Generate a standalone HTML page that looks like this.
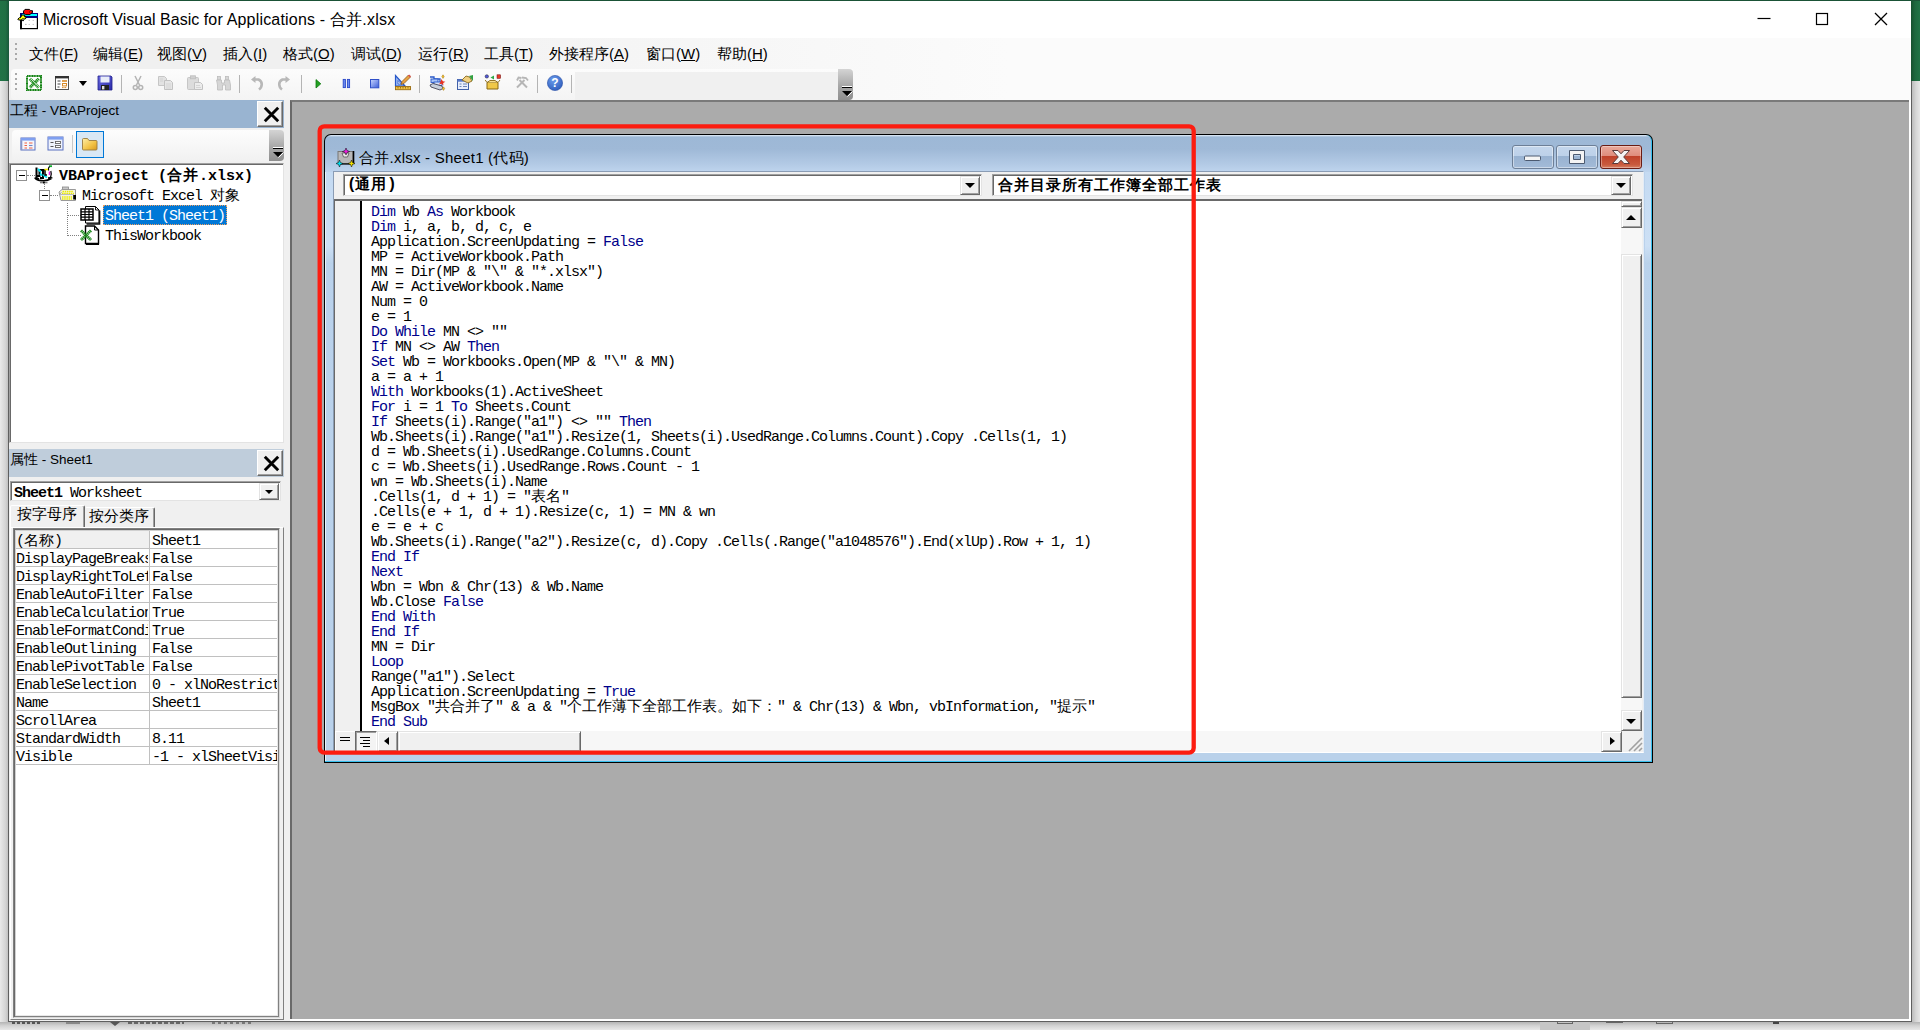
<!DOCTYPE html>
<html><head><meta charset="utf-8"><title>VBA</title>
<style>
*{box-sizing:border-box;margin:0;padding:0}
html,body{width:1920px;height:1030px;overflow:hidden}
body{position:relative;background:#e6e6e6;font-family:"Liberation Sans",sans-serif;color:#000}
.abs,.abs>*{position:absolute}
div,span,svg,i,b{position:absolute}
.t{white-space:nowrap;line-height:1}
.mono{font-family:"Liberation Mono",monospace;font-size:15px;letter-spacing:-1.0015px;white-space:pre;line-height:15px;height:15px}
.mono b{position:static;font-weight:bold}
.mono span,.mono i{position:static;font-style:normal}
.cj{display:inline-block;white-space:nowrap;font-size:15px;letter-spacing:0;font-family:"Liberation Sans",sans-serif;line-height:1px;vertical-align:baseline}
.kw{color:#00008b}
/* backdrop */
#green{left:0;top:0;width:1920px;height:81px;background:#217346}
#shl{left:0;top:81px;width:9px;height:949px;background:linear-gradient(to right,#e9e9e9,#d4d4d4 60%,#b9b9b9)}
#shr{left:1912px;top:81px;width:8px;height:949px;background:linear-gradient(to right,#bcbcbc,#d6d6d6 50%,#e6e6e6)}
#shb{left:0;top:1022px;width:1920px;height:8px;background:linear-gradient(to bottom,#b4b4b4,#d2d2d2 45%,#e8e8e8)}
#win{left:8px;top:0;width:1904px;height:1022px;background:#fff;border:1px solid #5f5f5f;border-top-color:#1d4f33}
/* title */
#ttl{left:43px;top:11.5px;font-size:16px;letter-spacing:0px}
/* cmd bars */
#cmd{left:9px;top:38px;width:1902px;height:62px;background:linear-gradient(to right,#f0f0f0 0,#f0f0f0 300px,#fbfbfb 1000px)}
.mi{top:45px;font-size:15px;white-space:nowrap;line-height:17px}
.mi u{text-decoration:underline;text-underline-offset:1px}
.dot{width:2px;height:2px;background:#a9a9a9;left:15px}
#tb{left:11px;top:69px;width:842px;height:31px;background:linear-gradient(#fcfcfc,#f4f4f4);border-radius:4px 0 0 4px}
.sep{width:1px;height:18px;background:#b4b4b4;top:75px}
#tbcombo{left:575px;top:72px;width:263px;height:28px;background:#f0f0f0}
#tbend{left:838px;top:69px;width:15px;height:31px;border-radius:0 4px 4px 0;background:linear-gradient(#d4d4d4,#a6a6a6 55%,#8e8e8e)}
/* dock */
#dock{left:9px;top:100px;width:281px;height:921px;background:#f0f0f0}
.cap{left:9px;width:275px;height:28px;font-size:15px}
.capt{left:1px;top:2px;font-size:13.5px;white-space:nowrap;line-height:17px}
.xbtn{left:248px;top:1px;width:26px;height:26px;background:#f0f0f0;border:1px solid;border-color:#fff #696969 #696969 #fff;box-shadow:inset -1px -1px 0 #a0a0a0}
.sunk{border:1px solid;border-color:#a0a0a0 #e3e3e3 #e3e3e3 #a0a0a0;box-shadow:inset 1px 1px 0 #696969;background:#fff}
.btn3d{background:#f0f0f0;border:1px solid;border-color:#e3e3e3 #696969 #696969 #e3e3e3;box-shadow:inset 1px 1px 0 #fff,inset -1px -1px 0 #a0a0a0}
.arr{width:0;height:0;border-style:solid}
/* mdi */
#mdi{left:290px;top:100px;width:1619px;height:919px;background:#ababab;border-left:2px solid #696969;border-top:2px solid #7a7a7a}
</style></head><body>
<div id="green"></div><div id="shl"></div><div id="shr"></div><div id="shb"></div>
<div id="win"></div>
<div style="left:1911px;top:0;width:9px;height:81px;background:linear-gradient(to right,#16502f,#1d683e 45%,#217346)"></div>
<div style="left:0;top:0;width:9px;height:81px;background:linear-gradient(to right,#217346,#207044 60%,#18583a)"></div>
<div style="left:0;top:0;width:1920px;height:1px;background:#1a5236"></div>
<!-- title bar -->
<svg style="left:17px;top:7px" width="23" height="24" viewBox="0 0 23 24">
 <rect x="3.600" y="6.600" width="16.800" height="15" fill="#fff" stroke="#000" stroke-width="1.200"/>
 <rect x="3" y="6" width="2" height="16.200" fill="#000"/>
 <rect x="3" y="6" width="18" height="5" fill="#000080"/>
 <rect x="5" y="7" width="15" height="2" fill="#00ffff"/>
 <path d="M11.700 13.400h1M15.700 13.400h1M8 17.400h1.600M11.700 17.400h1M15.700 17.400h1" stroke="#b0b0b0" stroke-width="1"/><g transform="translate(0,.9)">
 <path d="M6.500 3.200l1.500-1.700h4.500l1.200 1.300h1.800v2l-1.500.6-.9 1.300h-4.700l-1.900-1.400z" fill="#ff0000" stroke="#000" stroke-width="1"/>
 <path d="M12.500 3.200v2" stroke="#800" stroke-width=".8"/>
 <path d="M.8 11.200l1.600-1.400h1l1-1.500V7.200h3.200v1.600l1.400.2v1.300l-1 .8H5.500l-1.300 1H1.500z" fill="#ffff00" stroke="#000" stroke-width="1"/>
 <path d="M5 10.800h3" stroke="#808000" stroke-width="1.200"/>
 <path d="M3 12.200h4v1H3z" fill="#000"/></g>
</svg>
<div id="ttl" class="t">Microsoft Visual Basic <span style="position:static;letter-spacing:.19px">for Applications - 合并.xlsx</span></div>
<svg style="left:1750px;top:6px" width="150" height="26" viewBox="0 0 150 26">
 <path d="M7.5 12.5h13" stroke="#000" stroke-width="1.2" fill="none"/>
 <rect x="66.5" y="7.5" width="11" height="11" stroke="#000" stroke-width="1.2" fill="none"/>
 <path d="M125 7l12 12M137 7l-12 12" stroke="#000" stroke-width="1.3" fill="none"/>
</svg>
<!-- command bars -->
<div id="cmd"></div>
<div class="dot" style="top:43px"></div><div class="dot" style="top:48px"></div><div class="dot" style="top:53px"></div><div class="dot" style="top:58px"></div>
<div class="mi" style="left:29px">文件(<u>F</u>)</div>
<div class="mi" style="left:93px">编辑(<u>E</u>)</div>
<div class="mi" style="left:157px">视图(<u>V</u>)</div>
<div class="mi" style="left:223px">插入(<u>I</u>)</div>
<div class="mi" style="left:283px">格式(<u>O</u>)</div>
<div class="mi" style="left:351px">调试(<u>D</u>)</div>
<div class="mi" style="left:418px">运行(<u>R</u>)</div>
<div class="mi" style="left:484px">工具(<u>T</u>)</div>
<div class="mi" style="left:549px">外接程序(<u>A</u>)</div>
<div class="mi" style="left:646px">窗口(<u>W</u>)</div>
<div class="mi" style="left:717px">帮助(<u>H</u>)</div>
<div id="tb"></div>
<div class="dot" style="top:73px"></div><div class="dot" style="top:78px"></div><div class="dot" style="top:83px"></div><div class="dot" style="top:88px"></div>
<div id="tbcombo"></div>
<div id="tbend"></div>
<svg style="left:838px;top:84px" width="15" height="15" viewBox="0 0 15 15"><path d="M4 2.5h10" stroke="#fff" stroke-width="1"/><path d="M4 3.5h10" stroke="#000" stroke-width="1"/><path d="M4 7h10l-5 5z" fill="#000"/><path d="M9.5 12.5l5-5" stroke="#fff" stroke-width="1"/></svg>
<div class="sep" style="left:121px"></div><div class="sep" style="left:239px"></div><div class="sep" style="left:301px"></div><div class="sep" style="left:419px"></div><div class="sep" style="left:537px"></div><div class="sep" style="left:571px"></div>
<!-- toolbar icons -->
<svg style="left:26px;top:75px" width="16" height="16" viewBox="0 0 16 16">
 <rect x="1" y="1" width="14" height="14" fill="#fff" stroke="#128212" stroke-width="2" stroke-dasharray="1.300 .35"/>
 <path d="M3.800 3.800l9 8.700M12.800 3.800l-9 8.700" stroke="#1f8f1f" stroke-width="3.200" stroke-dasharray="1.300 .4"/>
 <path d="M4.500 3.600l8.500 8.200" stroke="#e8f4e8" stroke-width=".8"/>
</svg>
<svg style="left:54px;top:75px" width="16" height="16" viewBox="0 0 16 16">
 <rect x="1.5" y="1.5" width="13" height="13" fill="#fff" stroke="#555" stroke-width="1"/>
 <rect x="1" y="1" width="14" height="2.4" fill="#333"/>
 <path d="M3.5 6h3M3.5 9h3M3.5 12h2" stroke="#444" stroke-width="1"/>
 <rect x="8" y="5.2" width="5" height="1.6" fill="#d88a28"/><rect x="8.5" y="8.5" width="4" height="2.4" fill="none" stroke="#d88a28" stroke-width="1"/><path d="M8 12.6h5" stroke="#d88a28" stroke-width="1" stroke-dasharray="1.6 .8"/>
</svg>
<div class="arr" style="left:79px;top:81px;border-width:5px 4.5px 0 4.5px;border-color:#000 transparent transparent transparent"></div>
<svg style="left:97px;top:75px" width="16" height="16" viewBox="0 0 16 16">
 <defs><linearGradient id="sv" x1="0" y1="0" x2="1" y2="1"><stop offset="0" stop-color="#6a6ae0"/><stop offset="1" stop-color="#2a2aa8"/></linearGradient></defs>
 <path d="M1 1h13l1 1v13H1z" fill="url(#sv)" stroke="#20208a" stroke-width=".8"/>
 <rect x="3.5" y="1.5" width="9" height="6" fill="#e8ecf8"/>
 <rect x="4" y="10" width="8" height="5" fill="#222"/><rect x="5" y="11" width="2.4" height="3.4" fill="#ddd"/>
</svg>
<!-- disabled: cut copy paste find undo redo -->
<svg style="left:132px;top:75px" width="12" height="16" viewBox="0 0 12 16" fill="none" stroke="#b4b4b4" stroke-width="1.5">
 <path d="M3 1l4.5 9M9 1L4.5 10"/><circle cx="3.3" cy="12.5" r="2"/><circle cx="8.7" cy="12.5" r="2"/>
</svg>
<svg style="left:157px;top:75px" width="18" height="16" viewBox="0 0 18 16">
 <path d="M1.5 1.5h6l2 2v7h-8z" fill="#e2e2e2" stroke="#c6c6c6"/><path d="M7.500 5.500h6l2 2v7h-8z" fill="#e6e6e6" stroke="#c2c2c2"/>
 <path d="M9 9h5M9 11h5M9 13h5M3 4h3M3 6h3" stroke="#cfcfcf" stroke-width=".8"/>
</svg>
<svg style="left:186px;top:75px" width="18" height="16" viewBox="0 0 18 16">
 <rect x="1.500" y="2.500" width="11" height="12" rx="1" fill="#dcdcdc" stroke="#c6c6c6"/><rect x="4.500" y=".8" width="5" height="3" fill="#d0d0d0" stroke="#bdbdbd" stroke-width=".8"/>
 <path d="M8.500 7.500h6l2 2v5h-8z" fill="#ececec" stroke="#c2c2c2"/><path d="M10 10.500h4M10 12.500h5" stroke="#cfcfcf" stroke-width=".8"/>
</svg>
<svg style="left:215px;top:75px" width="16" height="16" viewBox="0 0 16 16" fill="#d6d6d6" stroke="#bcbcbc" stroke-width=".8">
 <rect x="2.500" y="1.500" width="3" height="3.500"/><rect x="10.500" y="1.500" width="3" height="3.500"/>
 <path d="M1.500 5h5v3h3V5h5l1 5v5h-5v-5h-3v5h-5v-5z"/>
</svg>
<svg style="left:250px;top:75px" width="14" height="16" viewBox="0 0 14 16" fill="none">
 <path d="M9 14.500c3.500-2.500 4-8-.5-10H4" stroke="#b8b8b8" stroke-width="2.600"/><path d="M5.500 1L1 4.500l4.500 3.500z" fill="#b8b8b8"/>
</svg>
<svg style="left:277px;top:75px" width="14" height="16" viewBox="0 0 14 16" fill="none">
 <path d="M5 14.500c-3.500-2.500-4-8 .5-10H10" stroke="#b8b8b8" stroke-width="2.600"/><path d="M8.500 1L13 4.500 8.500 8z" fill="#b8b8b8"/>
</svg>
<!-- run/pause/stop/design -->
<svg style="left:315px;top:78px" width="8" height="12" viewBox="0 0 8 12"><path d="M1 1.600l4.800 4.200L1 10z" fill="#22a022" stroke="#0e7a0e" stroke-width=".8"/></svg>
<svg style="left:342px;top:78px" width="9" height="11" viewBox="0 0 9 11"><rect x="1.200" y="1.400" width="2.200" height="8.200" fill="#6a8cf0" stroke="#2a48c8" stroke-width=".9"/><rect x="5.400" y="1.400" width="2.200" height="8.200" fill="#6a8cf0" stroke="#2a48c8" stroke-width=".9"/></svg>
<svg style="left:369px;top:78px" width="11" height="11" viewBox="0 0 11 11"><defs><linearGradient id="st" x1="0" y1="0" x2="1" y2="1"><stop offset="0" stop-color="#c8d6ff"/><stop offset="1" stop-color="#3a5cd8"/></linearGradient></defs><rect x="1.500" y="1.500" width="8.300" height="8.300" fill="url(#st)" stroke="#3050c8" stroke-width="1"/></svg>
<svg style="left:394px;top:74px" width="18" height="17" viewBox="0 0 18 17">
 <path d="M1.500 12V1.500L11 12z" fill="#9ab8f4" stroke="#2858c8" stroke-width="1.200"/><path d="M4 10V6.500L7.300 10z" fill="#fff" stroke="#2858c8" stroke-width=".8"/>
 <rect x="1.500" y="12.500" width="15" height="3.200" fill="#f0c040" stroke="#9a6a10" stroke-width=".9"/><path d="M4 13v1.500M6.500 13v1.500M9 13v1.500M11.500 13v1.500M14 13v1.500" stroke="#7a5208" stroke-width=".7"/>
 <path d="M7 10.500l1-3L14.500 1l2 2L10 9.500z" fill="#e8a040" stroke="#8a5a20" stroke-width=".8"/><path d="M14 1.500l2 2 1-1.200-1.800-1.800z" fill="#d85050"/>
</svg>
<svg style="left:428px;top:74px" width="19" height="18" viewBox="0 0 19 18">
 <path d="M2 3h4v2h6v3" fill="none" stroke="#2858c8" stroke-width="1.300"/>
 <rect x="3" y="5" width="7" height="3.500" fill="#a8c4f8" stroke="#2858c8" stroke-width=".9"/><rect x="6" y="8" width="8" height="3.500" fill="#d8e4fc" stroke="#2858c8" stroke-width=".9"/>
 <path d="M2 11l3-1.500 9 2.500 1 2.500-3 1.500-9-3z" fill="#c8d0dc" stroke="#445" stroke-width=".9"/>
 <path d="M13.500 5l1.300 2.200 2.600.5-2.200 1.300.2 2.600-2-1.800-2.400.800 1.200-2.200z" fill="#e83020"/>
 <path d="M15 .8l1.200 1.800L15 4.400l-1.200-1.800z" fill="#f0c030" stroke="#a07010" stroke-width=".5"/><path d="M15.500 12.800l1.200 1.800-1.200 1.800-1.200-1.800z" fill="#f0c030" stroke="#a07010" stroke-width=".5"/>
</svg>
<svg style="left:456px;top:74px" width="18" height="17" viewBox="0 0 18 17">
 <rect x="1.500" y="5.500" width="11" height="10" fill="#e8eefc" stroke="#4060a8" stroke-width="1"/><rect x="1.500" y="5.500" width="11" height="2.200" fill="#5878c8"/>
 <path d="M3.500 10h2M7 10h4M3.500 12.500h2M7 12.500h4" stroke="#6078b0" stroke-width=".9"/>
 <path d="M6 6l4-4 3.500 1 2.500 4-4 2z" fill="#f0d080" stroke="#8a6a20" stroke-width=".9"/><path d="M13 2l4-1v6z" fill="#30a040"/>
</svg>
<svg style="left:484px;top:74px" width="18" height="17" viewBox="0 0 18 17">
 <path d="M3 8.500h11v6.500H3z" fill="#f0c848" stroke="#8a6810" stroke-width="1"/><path d="M3 8.500l-1.800-2.500M14 8.500l2-2.500M3 8.500l3-2h5l3 2" fill="#f8e090" stroke="#8a6810" stroke-width=".9"/>
 <circle cx="2.800" cy="2.400" r="1.700" fill="#5058d8" stroke="#223" stroke-width=".5"/><path d="M6.500 3.500l3.500-2v4z" fill="#30a848"/><rect x="13" y=".8" width="3.600" height="3.600" fill="#e83828" stroke="#611" stroke-width=".5"/>
</svg>
<svg style="left:515px;top:76px" width="14" height="13" viewBox="0 0 14 13" fill="none" stroke="#b6b6b6">
 <path d="M2 11.500L9.500 4" stroke-width="2"/><path d="M12 11.500L4.500 4" stroke-width="2"/><path d="M7 1.500l4 .5 2 2.500" stroke-width="1.800"/><path d="M2 4.500l1.500-3 3 .5" stroke-width="1.800"/>
</svg>
<svg style="left:547px;top:75px" width="16" height="16" viewBox="0 0 16 16">
 <defs><radialGradient id="hp" cx=".4" cy=".3" r=".8"><stop offset="0" stop-color="#6a9cec"/><stop offset="1" stop-color="#2a58b8"/></radialGradient></defs>
 <circle cx="8" cy="8" r="7.600" fill="url(#hp)" stroke="#2a50a8" stroke-width=".6"/>
 <text x="8" y="12.200" font-family="Liberation Sans" font-weight="bold" font-size="12" fill="#fff" text-anchor="middle">?</text>
</svg>
<div id="dock"></div>
<!-- project caption -->
<div class="cap" style="top:100px;background:#99b4d1"><div class="capt">工程 - VBAProject</div>
 <div class="xbtn"><svg style="left:4.500px;top:3.500px" width="17" height="17" viewBox="0 0 17 17"><path d="M1.800 1.800l13.400 13.400M15.200 1.800L1.800 15.200" stroke="#000" stroke-width="2.900"/></svg></div>
</div>
<!-- project toolbar -->
<div style="left:12px;top:130px;width:258px;height:31px;background:linear-gradient(#fdfdfd,#f1f1f1);border-radius:4px 0 0 4px"></div>
<div style="left:269px;top:130px;width:15px;height:31px;border-radius:0 4px 4px 0;background:linear-gradient(#d4d4d4,#a8a8a8 55%,#8e8e8e)"></div>
<svg style="left:269px;top:145px" width="15" height="15" viewBox="0 0 15 15"><path d="M4 2.500h10" stroke="#fff" stroke-width="1"/><path d="M4 3.500h10" stroke="#000" stroke-width="1"/><path d="M4 7h10l-5 5z" fill="#000"/><path d="M9.500 12.500l5-5" stroke="#fff" stroke-width="1"/></svg>
<svg style="left:20px;top:137px" width="16" height="14" viewBox="0 0 16 14">
 <rect x="1" y="1" width="14" height="12" fill="#f4f6fc" stroke="#5a70c0" stroke-width="1"/><rect x="1" y="1" width="14" height="2.600" fill="#7f9ff0"/>
 <path d="M1.500 3.500v9.500" stroke="#8898c8" stroke-width="1.600"/>
 <path d="M4.500 6h2.500M4.500 8.500h2.500M4.500 11h2.500" stroke="#f06040" stroke-width="1.100"/><path d="M9 6h3.500M9 11h3.500" stroke="#f06040" stroke-width="1.100"/><path d="M9 8.500h3.500" stroke="#7088c8" stroke-width="1.100"/>
</svg>
<svg style="left:47px;top:136px" width="17" height="15" viewBox="0 0 17 15">
 <rect x="1" y="1" width="15" height="13" fill="#eef2fc" stroke="#5a70c0" stroke-width="1"/><rect x="1" y="1" width="15" height="2.600" fill="#7f9ff0"/>
 <path d="M3.500 6.500h3M3.500 10.500h3" stroke="#555" stroke-width="1.100"/><rect x="8.500" y="5.500" width="5" height="2" fill="#fff" stroke="#666" stroke-width=".9"/><rect x="8.500" y="9.500" width="5" height="2" fill="#fff" stroke="#666" stroke-width=".9"/>
</svg>
<div style="left:72px;top:135px;width:1px;height:18px;background:#c8c8c8"></div>
<div style="left:76px;top:131px;width:28px;height:27px;background:#d9e8f5;border:1px solid #0078d7"></div>
<svg style="left:81px;top:137px" width="17" height="14" viewBox="0 0 17 14">
 <defs><linearGradient id="fd" x1="0" y1="0" x2="1" y2="1"><stop offset="0" stop-color="#fdeea8"/><stop offset=".6" stop-color="#f2c244"/><stop offset="1" stop-color="#d89a20"/></linearGradient></defs>
 <path d="M1.500 2.500q0-1 1-1h4l1.500 2h7q1 0 1 1v7.500q0 1-1 1h-12.500q-1 0-1-1z" fill="url(#fd)" stroke="#9a7a40" stroke-width=".9"/>
</svg>
<!-- tree -->
<div class="sunk" style="left:9px;top:163px;width:275px;height:280px"></div>
<!-- tree lines -->
<div style="left:27px;top:175px;width:8px;border-top:1px dotted #808080"></div>
<div style="left:44px;top:184px;height:7px;border-left:1px dotted #808080"></div>
<div style="left:50px;top:195px;width:8px;border-top:1px dotted #808080"></div>
<div style="left:67px;top:203px;height:33px;border-left:1px dotted #808080"></div>
<div style="left:67px;top:215px;width:14px;border-top:1px dotted #808080"></div>
<div style="left:67px;top:235px;width:14px;border-top:1px dotted #808080"></div>
<!-- expand boxes -->
<div style="left:16px;top:170px;width:11px;height:11px;border:1px solid #919191;background:#fff"><div style="left:1.500px;top:3.500px;width:6px;height:1.500px;background:#000"></div></div>
<div style="left:39px;top:190px;width:11px;height:11px;border:1px solid #919191;background:#fff"><div style="left:1.500px;top:3.500px;width:6px;height:1.500px;background:#000"></div></div>
<!-- tree icons -->
<svg style="left:34px;top:165px" width="20" height="20" viewBox="0 0 20 20">
 <path d="M2.500 2.500v8.500h3V5h3.500v8h-3" fill="none" stroke="#000" stroke-width="2"/>
 <path d="M4 4l3 3M6 8.500l2 2M9 10l4 2.500" stroke="#00e0f0" stroke-width="2"/>
 <path d="M9 5h2v5h2" fill="none" stroke="#000" stroke-width="1.500"/>
 <path d="M10.500 4.500h3.500" stroke="#f0e800" stroke-width="1.600"/>
 <path d="M15.500 6.500v3.500" stroke="#f020f0" stroke-width="1.600"/>
 <path d="M15 1.200h3" stroke="#10b030" stroke-width="1.800"/>
 <path d="M15.500 1.500c-1.500 1.500-1.500 2.500-.8 4M16.800 6c.8 2 .5 4.500-.3 6.500l2 .5" fill="none" stroke="#000" stroke-width="1.200"/>
 <path d="M.8 12.500c1 1.800 3.500 3 7 3.200 3.500.3 7-.5 9.500-2.200M2 12.500l3 1.500M14 13l3.500-.5" fill="none" stroke="#000" stroke-width="1.700"/>
 <path d="M6 17.500h7.500" stroke="#808080" stroke-width="1.600"/><rect x="9" y="16.600" width="1.800" height="1.800" fill="#000"/>
</svg>
<svg style="left:58px;top:186px" width="20" height="17" viewBox="0 0 20 17">
 <rect x="4.500" y="1" width="6" height="2.400" fill="#c8c8c8" stroke="#888" stroke-width=".8"/>
 <path d="M1 6l3-2.500h13.500v11H3z" fill="#f4f4e0" stroke="#999" stroke-width="1"/>
 <path d="M4.500 5.500h11M4 7.500h12M4 11h10M4 13h10" stroke="#eaea00" stroke-width="1.600" stroke-dasharray="1.500 .7"/>
 <path d="M2 8.500h14" stroke="#bbb" stroke-width="1"/><rect x="15.200" y="9" width="2.800" height="4.500" fill="#000"/><path d="M1.500 8l2-1.500" stroke="#999" stroke-width="1"/>
</svg>
<svg style="left:80px;top:205px" width="21" height="20" viewBox="0 0 21 20">
 <path d="M5.500 1.500h10l3.500 3.500v13h-13.500z" fill="#fff" stroke="#000" stroke-width="1"/><path d="M19.600 5.500v13.600h-13" fill="none" stroke="#111" stroke-width="1.500"/><path d="M15.500 1.500v3.500h3.500" fill="none" stroke="#000" stroke-width=".9"/>
 <rect x="1" y="4" width="12" height="11" fill="#fff" stroke="#000" stroke-width="1.500"/><path d="M1 6.800h12M1 9.500h12M1 12.200h12M5 4v11M9 4v11" stroke="#000" stroke-width="1.200"/>
</svg>
<svg style="left:80px;top:225px" width="20" height="20" viewBox="0 0 20 20">
 <path d="M5.500 1h9l4 4v13.500h-13z" fill="#fff" stroke="#000" stroke-width="1.400"/><path d="M14.500 1v4h4" fill="none" stroke="#000" stroke-width="1"/><path d="M6 19.300h13" stroke="#000" stroke-width="1.400"/>
 <path d="M1 5.500l10 9.500M11 5.500l-10 9.500" stroke="#1f8a1f" stroke-width="3" stroke-dasharray="1.400 .45"/>
</svg>
<!-- tree labels -->
<div class="mono" style="left:59px;top:169px;font-weight:bold;letter-spacing:-.0015px">VBAProject (<span class="cj" style="width:32px;font-weight:bold;letter-spacing:1px">合并</span>.xlsx)</div>
<div class="mono" style="left:82px;top:189px">Microsoft Excel <span class="cj" style="width:30px">对象</span></div>
<div style="left:103px;top:205px;width:124px;height:20px;background:#0078d7;border:1px dotted #f0a060"></div>
<div class="mono" style="left:105px;top:209px;color:#fff">Sheet1 (Sheet1)</div>
<div class="mono" style="left:105px;top:229px">ThisWorkbook</div>
<!-- properties caption -->
<div class="cap" style="top:449px;background:#bfcddb"><div class="capt">属性 - Sheet1</div>
 <div class="xbtn"><svg style="left:4.500px;top:3.500px" width="17" height="17" viewBox="0 0 17 17"><path d="M1.800 1.800l13.400 13.400M15.200 1.800L1.800 15.200" stroke="#000" stroke-width="2.900"/></svg></div>
</div>
<!-- combobox -->
<div class="sunk" style="left:10px;top:481px;width:271px;height:20px"></div>
<div class="mono" style="left:14px;top:486px"><b>Sheet1</b> Worksheet</div>
<div class="btn3d" style="left:259px;top:483px;width:20px;height:17px"><div class="arr" style="left:5px;top:6px;border-width:4px 4px 0 4px;border-color:#000 transparent transparent transparent"></div></div>
<!-- tabs -->
<div style="left:10px;top:505px;width:75px;height:24px;background:#f0f0f0;border:1px solid;border-color:#fff #696969 transparent #fff;border-radius:2px 2px 0 0;box-shadow:inset -1px 0 0 #a0a0a0"></div>
<div style="left:85px;top:507px;width:70px;height:21px;background:#f0f0f0;border:1px solid;border-color:#fff #696969 transparent transparent;border-radius:2px 2px 0 0;box-shadow:inset -1px 0 0 #a0a0a0"></div>
<div class="t" style="left:17px;top:506px;font-size:15px">按字母序</div>
<div class="t" style="left:89px;top:508px;font-size:15px">按分类序</div>
<!-- grid -->
<div style="left:10px;top:527px;width:274px;height:493px;border:1px solid;border-color:#fff #808080 #808080 #fff"></div>
<div style="left:13px;top:528px;width:267px;height:490px;background:#fff;border:1px solid;border-color:#808080 #d8d8d8 #d8d8d8 #808080;box-shadow:inset 1px 1px 0 #696969,inset -1px -1px 0 #808080,inset 2px 2px 0 #d0d0d0,inset -2px -2px 0 #e8e8e8"></div>
<div style="left:16px;top:531px;width:133px;height:17px;background:#f0f0f0"></div>
<div style="left:16px;top:548px;width:261px;height:1px;background:#c0c0c0"></div>
<div class="mono" style="left:16px;top:534px;width:132px;overflow:hidden">(<span class="cj" style="width:30px">名称</span>)</div>
<div class="mono" style="left:152px;top:534px;width:125px;overflow:hidden">Sheet1</div>
<div style="left:16px;top:566px;width:261px;height:1px;background:#c0c0c0"></div>
<div class="mono" style="left:16px;top:552px;width:132px;overflow:hidden">DisplayPageBreaks</div>
<div class="mono" style="left:152px;top:552px;width:125px;overflow:hidden">False</div>
<div style="left:16px;top:584px;width:261px;height:1px;background:#c0c0c0"></div>
<div class="mono" style="left:16px;top:570px;width:132px;overflow:hidden">DisplayRightToLeft</div>
<div class="mono" style="left:152px;top:570px;width:125px;overflow:hidden">False</div>
<div style="left:16px;top:602px;width:261px;height:1px;background:#c0c0c0"></div>
<div class="mono" style="left:16px;top:588px;width:132px;overflow:hidden">EnableAutoFilter</div>
<div class="mono" style="left:152px;top:588px;width:125px;overflow:hidden">False</div>
<div style="left:16px;top:620px;width:261px;height:1px;background:#c0c0c0"></div>
<div class="mono" style="left:16px;top:606px;width:132px;overflow:hidden">EnableCalculation</div>
<div class="mono" style="left:152px;top:606px;width:125px;overflow:hidden">True</div>
<div style="left:16px;top:638px;width:261px;height:1px;background:#c0c0c0"></div>
<div class="mono" style="left:16px;top:624px;width:132px;overflow:hidden">EnableFormatConditionsCalculation</div>
<div class="mono" style="left:152px;top:624px;width:125px;overflow:hidden">True</div>
<div style="left:16px;top:656px;width:261px;height:1px;background:#c0c0c0"></div>
<div class="mono" style="left:16px;top:642px;width:132px;overflow:hidden">EnableOutlining</div>
<div class="mono" style="left:152px;top:642px;width:125px;overflow:hidden">False</div>
<div style="left:16px;top:674px;width:261px;height:1px;background:#c0c0c0"></div>
<div class="mono" style="left:16px;top:660px;width:132px;overflow:hidden">EnablePivotTable</div>
<div class="mono" style="left:152px;top:660px;width:125px;overflow:hidden">False</div>
<div style="left:16px;top:692px;width:261px;height:1px;background:#c0c0c0"></div>
<div class="mono" style="left:16px;top:678px;width:132px;overflow:hidden">EnableSelection</div>
<div class="mono" style="left:152px;top:678px;width:125px;overflow:hidden">0 - xlNoRestrictions</div>
<div style="left:16px;top:710px;width:261px;height:1px;background:#c0c0c0"></div>
<div class="mono" style="left:16px;top:696px;width:132px;overflow:hidden">Name</div>
<div class="mono" style="left:152px;top:696px;width:125px;overflow:hidden">Sheet1</div>
<div style="left:16px;top:728px;width:261px;height:1px;background:#c0c0c0"></div>
<div class="mono" style="left:16px;top:714px;width:132px;overflow:hidden">ScrollArea</div>
<div style="left:16px;top:746px;width:261px;height:1px;background:#c0c0c0"></div>
<div class="mono" style="left:16px;top:732px;width:132px;overflow:hidden">StandardWidth</div>
<div class="mono" style="left:152px;top:732px;width:125px;overflow:hidden">8.11</div>
<div style="left:16px;top:764px;width:261px;height:1px;background:#c0c0c0"></div>
<div class="mono" style="left:16px;top:750px;width:132px;overflow:hidden">Visible</div>
<div class="mono" style="left:152px;top:750px;width:125px;overflow:hidden">-1 - xlSheetVisible</div>
<div style="left:149px;top:531px;width:1px;height:234px;background:#c0c0c0"></div>
<div id="mdi"></div>
<!-- code window frame -->
<div id="cw" style="left:324px;top:134px;width:1329px;height:629px;border-radius:7px 7px 0 0;background:#000"></div>
<div style="left:325px;top:135px;width:1327px;height:627px;border-radius:6px 6px 0 0;background:linear-gradient(#e6f0fa 0,#9db8d6 2px,#9fb9d7 14px,#b4cbe6 30px,#bfd5ee 37px,#bad2ec 38px,#b9d1ea 100%);border-bottom:1px solid #38c0ee;border-right:1px solid #38c0ee"></div>
<div style="left:325px;top:172px;width:1px;height:589px;background:#eaf2fb"></div>
<div style="left:326px;top:172px;width:7px;height:92px;background:linear-gradient(#c4daf2,#cde0f5 80%,#b9d1ea)"></div>
<div style="left:1645px;top:172px;width:6px;height:92px;background:linear-gradient(#c4daf2,#cde0f5 80%,#b9d1ea)"></div>
<div style="left:333px;top:171px;width:1311px;height:582px;background:#f0f0f0;border:1px solid;border-color:#8a9cb4 #e4ecf6 #fff #8a9cb4"></div>
<!-- title icon + text -->
<svg style="left:336px;top:148px" width="20" height="19" viewBox="0 0 20 19">
 <rect x="2" y="3.500" width="15" height="12" fill="#b8b8b8" stroke="#777" stroke-width="1"/><path d="M17.500 3v13" stroke="#000" stroke-width="1.600"/><path d="M3 16h14" stroke="#000" stroke-width="1.200"/>
 <path d="M6 5h7l-1.500 4h-4z" fill="#e8e8e8" stroke="#555" stroke-width=".8"/>
 <path d="M10 0l1 2.500 2.500 1-2.500 1-1 2.500-1-2.500-2.500-1 2.500-1z" fill="#f020e0" stroke="#000" stroke-width=".5"/>
 <path d="M3.500 12l1 2.500 2.500 1-2.500 1-1 2.500-1-2.500-2.500-1 2.500-1z" fill="#00e0f0" stroke="#000" stroke-width=".5"/>
 <path d="M15.500 12l1 2.500 2.500 1-2.500 1-1 2.500-1-2.500-2.500-1 2.500-1z" fill="#f0e000" stroke="#000" stroke-width=".5"/>
</svg>
<div class="t" style="left:359px;top:149px;font-size:15px;line-height:17px;letter-spacing:.24px"><span style="position:static;font-size:15px">合并</span>.xlsx - Sheet1 (<span style="position:static">代码</span>)</div>
<!-- caption buttons -->
<div class="cbtn" style="left:1512px;top:145px;width:42px;height:24px;border-radius:3px;border:1px solid #6d7f97;background:linear-gradient(#c3d6ec 0,#bdd1e9 45%,#98b2d1 46%,#a3bbd8 100%);box-shadow:inset 0 0 0 1px rgba(255,255,255,.45)"></div>
<div class="cbtn" style="left:1556px;top:145px;width:42px;height:24px;border-radius:3px;border:1px solid #6d7f97;background:linear-gradient(#c3d6ec 0,#bdd1e9 45%,#98b2d1 46%,#a3bbd8 100%);box-shadow:inset 0 0 0 1px rgba(255,255,255,.45)"></div>
<div class="cbtn" style="left:1600px;top:145px;width:42px;height:24px;border-radius:3px;border:1px solid #6a1c14;background:linear-gradient(#e9a99b 0,#df8c7c 45%,#bf4029 46%,#c95a3e 85%,#d67f63 100%);box-shadow:inset 0 0 0 1px rgba(255,255,255,.35)"></div>
<svg style="left:1512px;top:145px" width="130" height="24" viewBox="0 0 130 24">
 <rect x="12.500" y="11" width="16" height="4.500" rx="1" fill="#f4f4f4" stroke="#4c5a70" stroke-width="1"/>
 <path d="M57.500 5.500h15v13h-15z M61.500 9.500v5h7v-5z" fill="#f4f4f4" fill-rule="evenodd" stroke="#4c5a70" stroke-width="1"/>
 <path d="M100.500 5.500h5.500l3 3.300 3-3.300h5.500l-5.800 6.500 5.800 6.500h-5.500l-3-3.300-3 3.300h-5.500l5.800-6.500z" fill="#f4f4f4" stroke="#5a3a3a" stroke-width="1"/>
</svg>
<!-- combos -->
<div class="sunk" style="left:343px;top:174px;width:639px;height:22px"></div>
<div class="btn3d" style="left:960px;top:176px;width:20px;height:19px"><div class="arr" style="left:4px;top:6px;border-width:5px 5px 0 5px;border-color:#000 transparent transparent transparent"></div></div>
<div class="t" style="left:347px;top:177px;font-size:16px;font-weight:bold;font-family:'Liberation Mono',monospace;letter-spacing:-1.600px">(<span class="cj" style="width:32px;position:static;font-weight:bold;letter-spacing:1px">通用</span>)</div>
<div class="sunk" style="left:992px;top:174px;width:641px;height:22px"></div>
<div class="btn3d" style="left:1611px;top:176px;width:20px;height:19px"><div class="arr" style="left:4px;top:6px;border-width:5px 5px 0 5px;border-color:#000 transparent transparent transparent"></div></div>
<div class="t cj" style="left:998px;top:177px;font-weight:bold;letter-spacing:1px;line-height:16px">合并目录所有工作簿全部工作表</div>
<!-- code pane -->
<div style="left:334px;top:199px;width:1308px;height:553px;background:#fff;border-top:2px solid #696969;border-left:1px solid #696969"></div>
<div style="left:335px;top:201px;width:25px;height:530px;background:#f0f0f0"></div>
<div style="left:360px;top:201px;width:2px;height:530px;background:#000"></div>
<!-- v scrollbar -->
<div style="left:1621px;top:201px;width:21px;height:530px;background:#f7f7f7"></div>
<div class="btn3d" style="left:1621px;top:201px;width:21px;height:6px"></div>
<div class="btn3d" style="left:1621px;top:207px;width:21px;height:21px"><div class="arr" style="left:4px;top:7px;border-width:0 5px 5px 5px;border-color:transparent transparent #000 transparent"></div></div>
<div class="btn3d" style="left:1621px;top:254px;width:21px;height:444px"></div>
<div class="btn3d" style="left:1621px;top:710px;width:21px;height:21px"><div class="arr" style="left:4px;top:8px;border-width:5px 5px 0 5px;border-color:#000 transparent transparent transparent"></div></div>
<!-- h scrollbar -->
<div style="left:335px;top:731px;width:1307px;height:21px;background:#f7f7f7"></div>
<div style="left:335px;top:731px;width:20px;height:21px;background:#f0f0f0;border-top:1px solid #fff;border-left:1px solid #fff"><svg style="left:4px;top:5px" width="11" height="8" viewBox="0 0 11 8"><path d="M0 .5h10M0 3.500h10M0 6.500h0" stroke="#000" stroke-width="1"/><path d="M0 .5h10M3 3.500h7" stroke="#000"/></svg></div>
<div style="left:355px;top:731px;width:22px;height:21px;background:#f4f4f4;border:1px solid;border-color:#696969 #fff #fff #696969;box-shadow:inset 1px 1px 0 #a0a0a0"><svg style="left:4px;top:5px" width="11" height="10" viewBox="0 0 11 10"><path d="M0 .5h10M3 3.500h7M0 6.500h10M3 9.500h7" stroke="#000" stroke-width="1.200"/></svg></div>
<div class="btn3d" style="left:377px;top:731px;width:21px;height:21px"><div class="arr" style="left:6px;top:5px;border-width:4.500px 5px 4.500px 0;border-color:transparent #000 transparent transparent"></div></div>
<div class="btn3d" style="left:398px;top:731px;width:183px;height:21px"></div>
<div class="btn3d" style="left:1601px;top:731px;width:21px;height:21px"><div class="arr" style="left:8px;top:5px;border-width:4.500px 0 4.500px 5px;border-color:transparent transparent transparent #000"></div></div>
<div style="left:1622px;top:731px;width:20px;height:21px;background:#f0f0f0"><svg style="left:5px;top:5px" width="16" height="16" viewBox="0 0 16 16"><path d="M15 2L2 15M15 7L7 15M15 12l-3 3" stroke="#a0a0a0" stroke-width="1.600"/></svg></div>
<div class="mono" style="left:371px;top:205px"><span class="kw">Dim</span> Wb <span class="kw">As</span> Workbook</div>
<div class="mono" style="left:371px;top:220px"><span class="kw">Dim</span> i, a, b, d, c, e</div>
<div class="mono" style="left:371px;top:235px">Application.ScreenUpdating = <span class="kw">False</span></div>
<div class="mono" style="left:371px;top:250px">MP = ActiveWorkbook.Path</div>
<div class="mono" style="left:371px;top:265px">MN = Dir(MP &amp; "\" &amp; "*.xlsx")</div>
<div class="mono" style="left:371px;top:280px">AW = ActiveWorkbook.Name</div>
<div class="mono" style="left:371px;top:295px">Num = 0</div>
<div class="mono" style="left:371px;top:310px">e = 1</div>
<div class="mono" style="left:371px;top:325px"><span class="kw">Do</span> <span class="kw">While</span> MN &lt;&gt; ""</div>
<div class="mono" style="left:371px;top:340px"><span class="kw">If</span> MN &lt;&gt; AW <span class="kw">Then</span></div>
<div class="mono" style="left:371px;top:355px"><span class="kw">Set</span> Wb = Workbooks.Open(MP &amp; "\" &amp; MN)</div>
<div class="mono" style="left:371px;top:370px">a = a + 1</div>
<div class="mono" style="left:371px;top:385px"><span class="kw">With</span> Workbooks(1).ActiveSheet</div>
<div class="mono" style="left:371px;top:400px"><span class="kw">For</span> i = 1 <span class="kw">To</span> Sheets.Count</div>
<div class="mono" style="left:371px;top:415px"><span class="kw">If</span> Sheets(i).Range("a1") &lt;&gt; "" <span class="kw">Then</span></div>
<div class="mono" style="left:371px;top:430px">Wb.Sheets(i).Range("a1").Resize(1, Sheets(i).UsedRange.Columns.Count).Copy .Cells(1, 1)</div>
<div class="mono" style="left:371px;top:445px">d = Wb.Sheets(i).UsedRange.Columns.Count</div>
<div class="mono" style="left:371px;top:460px">c = Wb.Sheets(i).UsedRange.Rows.Count - 1</div>
<div class="mono" style="left:371px;top:475px">wn = Wb.Sheets(i).Name</div>
<div class="mono" style="left:371px;top:490px">.Cells(1, d + 1) = "<span class="cj" style="width:30px">表名</span>"</div>
<div class="mono" style="left:371px;top:505px">.Cells(e + 1, d + 1).Resize(c, 1) = MN &amp; wn</div>
<div class="mono" style="left:371px;top:520px">e = e + c</div>
<div class="mono" style="left:371px;top:535px">Wb.Sheets(i).Range("a2").Resize(c, d).Copy .Cells(.Range("a1048576").End(xlUp).Row + 1, 1)</div>
<div class="mono" style="left:371px;top:550px"><span class="kw">End</span> <span class="kw">If</span></div>
<div class="mono" style="left:371px;top:565px"><span class="kw">Next</span></div>
<div class="mono" style="left:371px;top:580px">Wbn = Wbn &amp; Chr(13) &amp; Wb.Name</div>
<div class="mono" style="left:371px;top:595px">Wb.Close <span class="kw">False</span></div>
<div class="mono" style="left:371px;top:610px"><span class="kw">End</span> <span class="kw">With</span></div>
<div class="mono" style="left:371px;top:625px"><span class="kw">End</span> <span class="kw">If</span></div>
<div class="mono" style="left:371px;top:640px">MN = Dir</div>
<div class="mono" style="left:371px;top:655px"><span class="kw">Loop</span></div>
<div class="mono" style="left:371px;top:670px">Range("a1").Select</div>
<div class="mono" style="left:371px;top:685px">Application.ScreenUpdating = <span class="kw">True</span></div>
<div class="mono" style="left:371px;top:700px">MsgBox "<span class="cj" style="width:60px">共合并了</span>" &amp; a &amp; "<span class="cj" style="width:210px">个工作薄下全部工作表。如下：</span>" &amp; Chr(13) &amp; Wbn, vbInformation, "<span class="cj" style="width:30px">提示</span>"</div>
<div class="mono" style="left:371px;top:715px"><span class="kw">End</span> <span class="kw">Sub</span></div>
<!-- remnants of status bar below window -->
<div style="left:1540px;top:1022px;width:50px;height:8px;background:#c6c6c6"></div>
<div style="left:1557px;top:1022px;width:16px;height:2px;border:1px solid #666;border-top:0"></div>
<div style="left:1606px;top:1022px;width:17px;height:1px;background:#666"></div>
<div style="left:1656px;top:1022px;width:17px;height:2px;border:1px solid #666;border-top:0"></div>
<div style="left:1773px;top:1022px;width:6px;height:2px;background:#444"></div>
<div style="left:12px;top:1022px;width:28px;height:2px;background:repeating-linear-gradient(90deg,#555 0 3px,transparent 3px 5px)"></div>
<div style="left:66px;top:1022px;width:14px;height:2px;background:#888"></div>
<div style="left:110px;top:1022px;width:10px;height:0;border-style:solid;border-width:4px 5px 0 5px;border-color:#555 transparent transparent transparent"></div>
<div style="left:128px;top:1022px;width:56px;height:2px;background:repeating-linear-gradient(90deg,#666 0 4px,transparent 4px 6px)"></div>
<div style="left:212px;top:1022px;width:40px;height:2px;background:repeating-linear-gradient(90deg,#777 0 3px,transparent 3px 6px)"></div>
<!-- red annotation -->
<svg style="left:310px;top:118px" width="900" height="650" viewBox="310 118 900 650"><rect x="319.700" y="126.300" width="874" height="626.300" rx="4.500" ry="4.500" fill="none" stroke="#fc1c10" stroke-width="4.300"/></svg>
</body></html>
